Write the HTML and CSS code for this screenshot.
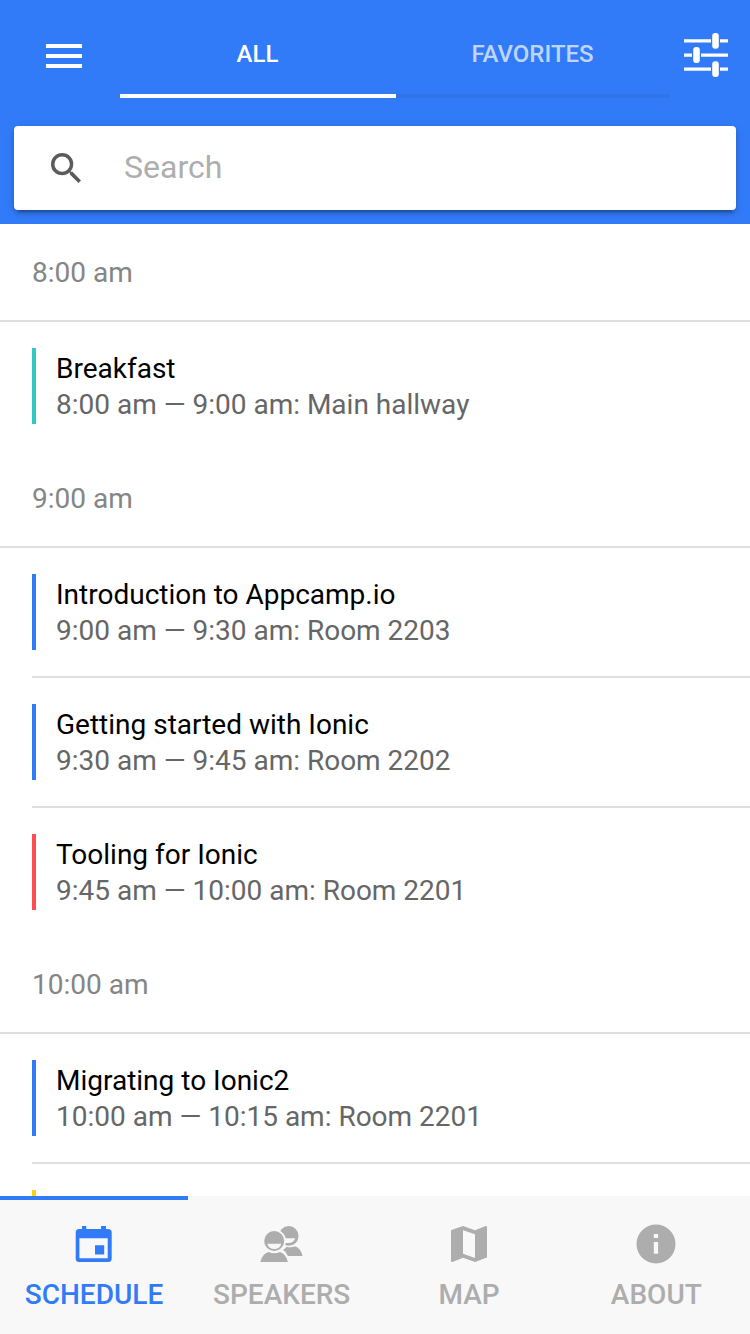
FILE: index.html
```html
<!DOCTYPE html>
<html lang="en">
<head>
<meta charset="utf-8">
<title>Schedule</title>
<link rel="stylesheet" href="styles.css">
</head>
<body>
<div class="app">
  <header class="header">
    <div class="toolbar">
      <button class="menu-button" aria-label="Menu">
        <svg width="36" height="24" viewBox="0 0 36 24" fill="#fff"><path d="M0 0h36v4H0zM0 10h36v4H0zM0 20h36v4H0z"/></svg>
      </button>
      <nav class="segment">
        <span class="segment-item segment-item-active">ALL</span>
        <span class="segment-item">FAVORITES</span>
      </nav>
      <button class="filter-button" aria-label="Filter">
        <svg width="44" height="44" viewBox="0 0 44 44" fill="#fff">
          <path d="M0 6.3h27v3.3H0zM36 6.3h8v3.3h-8zM0 20.4h8v3.3H0zM17 20.4h27v3.3H17zM0 34.5h27v3.3H0zM36 34.5h8v3.3h-8z"/>
          <rect x="28.2" y="0" width="6.6" height="15.8" rx="3"/>
          <rect x="9.2" y="14.1" width="6.6" height="15.8" rx="3"/>
          <rect x="28.2" y="28.2" width="6.6" height="15.8" rx="3"/>
        </svg>
      </button>
    </div>
    <div class="searchbar">
      <svg class="search-icon" width="30" height="30" viewBox="3 3 17.49 17.49" fill="#5b5b5b"><path d="M15.5 14h-.79l-.28-.27A6.47 6.47 0 0 0 16 9.5 6.5 6.5 0 1 0 9.500 16c1.610 0 3.090-.590 4.230-1.570l.270.280v.790l5 4.990L20.490 19l-4.990-5zm-6 0a4.500 4.500 0 1 1 0-9 4.500 4.500 0 0 1 0 9z"/></svg>
      <span class="search-text">Search</span>
    </div>
  </header>

  <main class="content">
    <section class="group">
      <h2 class="group-time">8:00 am</h2>
      <div class="session"><div class="session-body teal"><h3>Breakfast</h3><p>8:00 am — 9:00 am: Main hallway</p></div></div>
    </section>
    <section class="group">
      <h2 class="group-time">9:00 am</h2>
      <div class="session"><div class="session-body blue"><h3>Introduction to Appcamp.io</h3><p>9:00 am — 9:30 am: Room 2203</p></div></div>
      <div class="session"><div class="session-body blue"><h3>Getting started with Ionic</h3><p>9:30 am — 9:45 am: Room 2202</p></div></div>
      <div class="session"><div class="session-body red"><h3>Tooling for Ionic</h3><p>9:45 am — 10:00 am: Room 2201</p></div></div>
    </section>
    <section class="group">
      <h2 class="group-time">10:00 am</h2>
      <div class="session"><div class="session-body blue"><h3>Migrating to Ionic2</h3><p>10:00 am — 10:15 am: Room 2201</p></div></div>
      <div class="session"><div class="session-body yellow"></div></div>
    </section>
  </main>

  <nav class="tabs">
    <a class="tab tab-active">
      <svg width="44" height="40" viewBox="-2 0 44 40" fill="currentColor"><path fill-rule="evenodd" d="M8 2h4.300v3H27V2h5v3h2.200q3.500 0 3.500 3.500v26q0 3.500-3.500 3.500H5.200q-3.500 0-3.500-3.500v-26Q1.700 5 5.200 5H8zM5.400 14.200v20h28.300v-20zM21 21.300h9.200v9.200H21z"/></svg>
      <span>SCHEDULE</span>
    </a>
    <a class="tab">
      <svg width="44" height="40" viewBox="0.300 0 44 40" fill="currentColor">
        <circle cx="29" cy="11.900" r="9.900"/>
        <path d="M22 14.300h13.500q-1.500 4.700-7 4.700h-6.500z" fill="#f8f8f8"/>
        <path d="M28.200 32q-1.400-4.200-5-6.300 2.600-1.100 3.800-3 4.500 1.300 8.200-.5 6 2 7.600 9.800z"/>
        <circle cx="14.500" cy="17" r="11.700" fill="#f8f8f8"/>
        <circle cx="14.500" cy="17" r="10"/>
        <path d="M7.600 19.700h14q-1.500 5.300-7 5.300t-7-5.300z" fill="#f8f8f8"/>
        <path d="M.6 38Q2.600 29.500 9 28q5.500 2.600 11.200 0 6 1.700 8 10z"/>
      </svg>
      <span>SPEAKERS</span>
    </a>
    <a class="tab">
      <svg width="44" height="40" viewBox="0 0 44 40" fill="currentColor"><path fill-rule="evenodd" d="M4.500 6 16 2l12 4.200L38.700 2q1.300-.2 1.300 1v30.500L28 38l-12-4.200L5.500 38Q4 38.300 4 37V7q0-.7.500-1zM16 6.200v23.600l12 4.200V10.300z"/></svg>
      <span>MAP</span>
    </a>
    <a class="tab">
      <svg width="44" height="40" viewBox="0 0 44 40" fill="currentColor"><path fill-rule="evenodd" d="M2.500 20a19.500 19.500 0 1 1 39 0 19.500 19.500 0 1 1-39 0zM19.800 10v4h4.300v-4zM19.800 18v11.800h4.300V18z"/></svg>
      <span>ABOUT</span>
    </a>
  </nav>
</div>
</body>
</html>
```
FILE: styles.css
```css
* { box-sizing: border-box; margin: 0; padding: 0; }
body { font-family: Roboto, sans-serif; background: #fff; }
svg { display: block; flex: none; }
button { border: 0; background: none; }

.app { width: 750px; height: 1334px; display: flex; flex-direction: column; overflow: hidden; }

.header { flex: none; height: 224px; background: #327bf8; }
.toolbar { height: 112px; display: flex; align-items: flex-start; }
.menu-button { width: 120px; padding: 44px 0 0 46px; }
.filter-button { width: 80px; padding: 33px 0 0 14px; }
.segment { display: flex; flex: 1; height: 98px; padding-top: 10px; }
.segment-item {
  flex: 1;
  height: 88px;
  padding-right: 1px;
  line-height: 88px;
  text-align: center;
  font-size: 24px;
  font-weight: 500;
  color: rgba(255, 255, 255, 0.7);
  border-bottom: 4px solid #2f74e9;
}
.segment-item-active { flex: 0 0 276px; color: #fff; border-bottom-color: #fff; }

.searchbar {
  height: 84px;
  margin: 14px 14px 0;
  padding-left: 37px;
  display: flex;
  align-items: center;
  background: #fff;
  border-radius: 4px;
  box-shadow: 0 4px 4px rgba(0, 0, 0, 0.14), 0 6px 2px -4px rgba(0, 0, 0, 0.2), 0 2px 10px rgba(0, 0, 0, 0.12);
}
.search-text { margin-left: 43px; padding-bottom: 2px; font-size: 32px; line-height: 82px; color: #aeaeae; }

.content { flex: 1; min-height: 0; overflow: hidden; }
.group-time {
  height: 98px;
  padding-left: 32px;
  line-height: 97px;
  font-size: 28px;
  font-weight: 400;
  color: #858585;
  border-bottom: 2px solid #dedede;
}
.session { height: 130px; margin-left: 32px; padding-top: 26px; border-bottom: 2px solid #dedede; }
.session:last-child { height: 128px; border-bottom: 0; }
.session-body { height: 76px; padding: 3px 0 0 20px; border-left: 4px solid; }
.session-body h3 { font-size: 28px; font-weight: 400; line-height: 36px; color: #000; }
.session-body p { font-size: 28px; line-height: 36px; color: #666; }
.teal { border-color: #32c8c4; }
.blue { border-color: #327bf8; }
.red { border-color: #fd4c52; }
.yellow { border-color: #ffd013; }

.tabs { flex: none; height: 138px; display: flex; background: #f8f8f8; }
.tab {
  flex: 1;
  display: flex;
  flex-direction: column;
  align-items: center;
  padding-top: 24px;
  border-top: 4px solid transparent;
  color: #adadad;
  font-size: 28px;
  font-weight: 500;
}
.tab span { margin-top: 14px; line-height: 33px; }
.tab-active { flex: 0 0 188px; color: #327bf8; border-top-color: #327bf8; }
```
